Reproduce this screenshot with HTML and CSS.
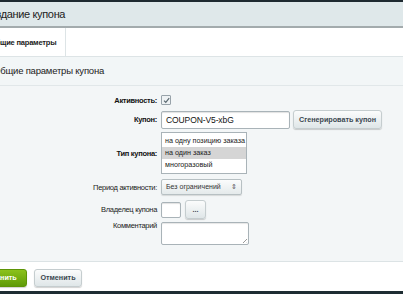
FILE: index.html
```html
<!DOCTYPE html>
<html lang="ru">
<head>
  <meta charset="UTF-8" />
  <title>Создание купона</title>
  <link rel="stylesheet" href="styles.css">
</head>
<body>
  <div class="topline"></div>
  <div class="page">

    <div class="head">
      <h1>Создание купона</h1>
    </div>

    <div class="tabs">
      <div class="tab">Общие параметры</div>
    </div>

    <div class="section-title">Общие параметры купона</div>

    <div class="form">
      <div class="row row-active">
        <label class="bold">Активность:</label>
        <span class="check">
          <svg width="7" height="7" viewBox="0 0 7 7"><path d="M1 3.6 L2.8 5.4 L6.2 1.2" fill="none" stroke="#5a6870" stroke-width="1.2"/></svg>
        </span>
      </div>

      <div class="row row-coupon">
        <label class="bold">Купон:</label>
        <div class="line">
          <div class="input wide">COUPON-V5-xbG</div>
          <button class="btn">Сгенерировать купон</button>
        </div>
      </div>

      <div class="row row-type">
        <label class="bold">Тип купона:</label>
        <div class="listbox">
          <div class="opt">на одну позицию заказа</div>
          <div class="opt selected">на один заказ</div>
          <div class="opt">многоразовый</div>
        </div>
      </div>

      <div class="row row-period">
        <label>Период активности:</label>
        <div class="select">Без ограничений <span class="arrows">&#8661;</span></div>
      </div>

      <div class="row row-owner">
        <label>Владелец купона</label>
        <div class="line">
          <div class="input small"></div>
          <button class="btn dots">...</button>
        </div>
      </div>

      <div class="row row-comment">
        <label>Комментарий</label>
        <div class="textarea"><span class="grip"></span></div>
      </div>
    </div>

    <div class="footer">
      <button class="btn save">Сохранить</button>
      <button class="btn cancel">Отменить</button>
    </div>
  </div>
  <div class="bottomline"></div>
</body>
</html>
```

FILE: styles.css
```css
html, body {
  margin: 0;
  padding: 0;
  overflow: hidden;
}
body {
  font-family: "Liberation Sans", Arial, sans-serif;
  color: #000;
  width: 403px;
  height: 294px;
  background: #fff;
}
.topline {
  height: 2px;
  background: #1e2a30;
}
.page {
  margin-left: -40px;
  white-space: nowrap;
}
.head {
  height: 24px;
  background: #dfe8ea;
  border-bottom: 2px solid #a3abad;
  padding-left: 23px;
}
.head h1 {
  margin: 0;
  font-size: 11px;
  letter-spacing: -0.35px;
  font-weight: normal;
  color: #222;
  line-height: 25px;
}
.tabs {
  height: 28px;
  background: #fff;
  border-bottom: 1px solid #dde4e6;
}
.tab {
  box-sizing: border-box;
  width: 106px;
  height: 28px;
  padding-left: 30px;
  border-right: 1px solid #dde4e6;
  font-size: 7.5px;
  letter-spacing: -0.2px;
  font-weight: bold;
  color: #222;
  line-height: 29px;
}
.section-title {
  height: 28px;
  background: #f2f6f7;
  border-bottom: 1px solid #e1e7e9;
  padding-left: 33px;
  font-size: 9.5px;
  letter-spacing: -0.2px;
  color: #222;
  line-height: 28px;
}
.form {
  background: #f3f6f7;
  padding: 5px 0 17px;
  border-bottom: 1px solid #dce3e5;
}
.row {
  display: grid;
  grid-template-columns: 197px auto;
  column-gap: 4px;
  align-items: center;
  font-size: 7.5px;
}
.row label {
  text-align: right;
  color: #222;
  letter-spacing: -0.3px;
}
.row label.bold {
  font-weight: bold;
  color: #111;
}
.row-active { height: 18px; }
.row-coupon { height: 18px; margin-top: 1px; }
.row-type { height: 42px; margin-top: 4px; }
.row-period { height: 16px; margin-top: 5px; }
.row-owner { height: 18px; margin-top: 5px; }
.row-comment { height: 22px; margin-top: 4px; align-items: start; }
.row-comment label { line-height: 8px; }
.check {
  width: 8px;
  height: 8px;
  border: 1px solid #98a3aa;
  border-radius: 1px;
  background: #eef2f4;
  display: flex;
  align-items: center;
  justify-content: center;
}
.line {
  display: flex;
  align-items: center;
  gap: 3px;
}
.input {
  box-sizing: border-box;
  height: 18px;
  border: 1px solid #a9b3b8;
  border-radius: 2px;
  background: #fff;
  box-shadow: inset 0 1px 1px rgba(0,0,0,0.12);
  font-size: 8.5px;
  letter-spacing: -0.1px;
  line-height: 16px;
  padding-left: 4px;
  color: #111;
}
.input.wide { width: 129px; }
.input.small { width: 20px; height: 16px; margin-right: 1px; }
.btn {
  font-family: inherit;
  height: 19px;
  border: 1px solid #c5cdcf;
  border-radius: 3px;
  background: linear-gradient(#fbfcfc, #dfe6e8);
  box-shadow: 0 1px 1px rgba(0,0,0,0.18);
  font-size: 7.2px;
  font-weight: bold;
  color: #3b4850;
  padding: 0;
  width: 89px;
  cursor: pointer;
}
.btn.dots { width: 21px; height: 19px; }
.listbox {
  box-sizing: border-box;
  width: 86px;
  height: 42px;
  border: 1px solid #a9b3b8;
  background: #fff;
  padding-top: 2px;
}
.opt {
  height: 12px;
  line-height: 12px;
  padding-left: 3px;
  font-size: 7.2px;
  color: #222;
}
.opt.selected {
  background: #d5d5d5;
}
.select {
  box-sizing: border-box;
  width: 81px;
  height: 16px;
  border: 1px solid #b7c0c3;
  border-radius: 2px;
  background: linear-gradient(#fbfcfc, #e4eaeb);
  box-shadow: 0 1px 1px rgba(0,0,0,0.12);
  font-size: 7px;
  line-height: 14px;
  padding-left: 4px;
  color: #333;
  position: relative;
}
.arrows {
  position: absolute;
  right: 4px;
  top: 0;
  font-size: 7px;
  color: #555;
}
.textarea {
  box-sizing: border-box;
  width: 88px;
  height: 23px;
  border: 1px solid #a9b3b8;
  border-radius: 2px;
  background: #fff;
  box-shadow: inset 0 1px 1px rgba(0,0,0,0.1);
  position: relative;
}
.grip {
  position: absolute;
  right: 1px;
  bottom: 1px;
  width: 4px;
  height: 4px;
  background: linear-gradient(135deg, transparent 45%, #999 50%, transparent 60%, transparent 75%, #999 80%, transparent 90%);
}
.footer {
  height: 29px;
  background: #fff;
  display: flex;
  align-items: center;
  gap: 7px;
  padding-left: 8px;
}
.btn.save {
  width: 59px;
  height: 18px;
  border: 1px solid #5d9407;
  background: linear-gradient(#8bc21c, #5f9b08);
  color: #fff;
  margin-top: 2px;
}
.btn.cancel {
  width: 48px;
  height: 18px;
  margin-top: 2px;
}
.bottomline {
  height: 3px;
  background: #1e2d33;
}
```
